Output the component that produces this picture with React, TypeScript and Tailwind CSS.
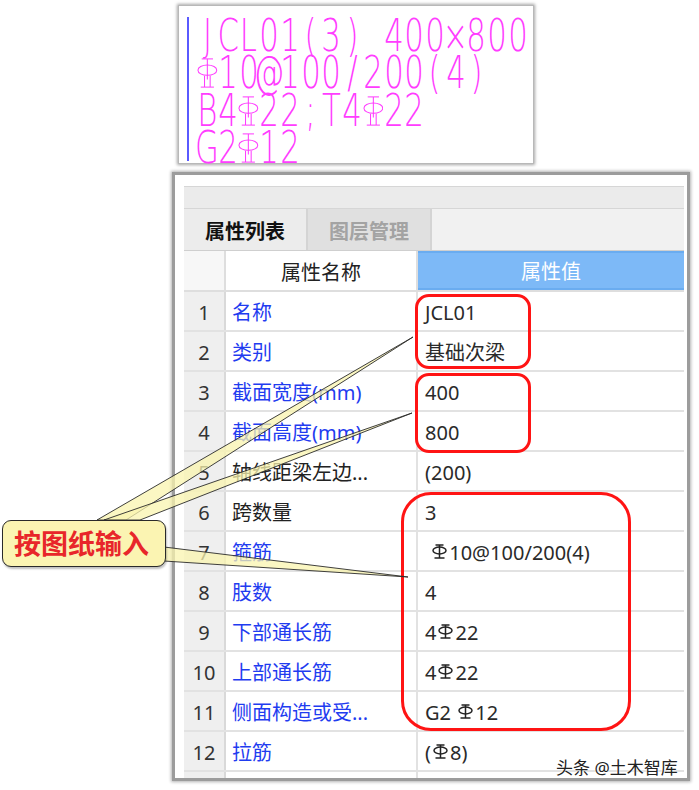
import React from "react";

const CJK = "font-['Noto_Sans','Noto_Sans_CJK_SC',sans-serif]";

type Row = { n: number; name: string; value: string; blue: boolean };

// "#" in a value stands for the grade-III rebar symbol
const ROWS: Row[] = [
  { n: 1, name: "名称", value: "JCL01", blue: true },
  { n: 2, name: "类别", value: "基础次梁", blue: true },
  { n: 3, name: "截面宽度(mm)", value: "400", blue: true },
  { n: 4, name: "截面高度(mm)", value: "800", blue: true },
  { n: 5, name: "轴线距梁左边...", value: "(200)", blue: false },
  { n: 6, name: "跨数量", value: "3", blue: false },
  { n: 7, name: "箍筋", value: " #10@100/200(4)", blue: true },
  { n: 8, name: "肢数", value: "4", blue: true },
  { n: 9, name: "下部通长筋", value: "4#22", blue: true },
  { n: 10, name: "上部通长筋", value: "4#22", blue: true },
  { n: 11, name: "侧面构造或受...", value: "G2 #12", blue: true },
  { n: 12, name: "拉筋", value: "(#8)", blue: true },
  { n: 13, name: "", value: "", blue: true },
];

const CAD_LINES = ["JCL01(3) 400×800", "#10@100/200(4)", "B4#22;T4#22", "G2#12"];

function RebarIcon({ className }: { className?: string }) {
  return (
    <svg viewBox="0 0 16 20" className={className} fill="none" stroke="currentColor" strokeWidth="1.5">
      <line x1="4" y1="3" x2="12" y2="3" />
      <line x1="8" y1="3" x2="8" y2="16" />
      <ellipse cx="8" cy="8.5" rx="6.5" ry="3.4" />
      <line x1="3" y1="16" x2="13" y2="16" />
    </svg>
  );
}

function CadRebar() {
  return (
    <svg viewBox="0 0 22 34" className="h-[34px] w-[22px]" fill="none" stroke="currentColor" strokeWidth="1.1">
      <line x1="5" y1="2" x2="17" y2="2" />
      <line x1="11" y1="2" x2="11" y2="24" />
      <ellipse cx="11" cy="14" rx="10" ry="5.5" />
      <line x1="8" y1="20" x2="8" y2="32" />
      <line x1="14" y1="20" x2="14" y2="32" />
      <line x1="4" y1="32" x2="18" y2="32" />
    </svg>
  );
}

function CadLine({ text }: { text: string }) {
  return (
    <div className="flex h-[37.5px] items-center">
      {text.split("").map((ch, i) => (
        <span key={i} className="inline-flex w-[20.7px] justify-center">
          {ch === "#" ? (
            <CadRebar />
          ) : (
            <span className="inline-block scale-x-[0.7] font-['DejaVu_Sans',sans-serif] text-[44px] font-extralight leading-none">
              {ch === " " ? "\u00a0" : ch}
            </span>
          )}
        </span>
      ))}
    </div>
  );
}

function Value({ text }: { text: string }) {
  return (
    <span className="flex items-center whitespace-pre">
      {text.split("").map((ch, i) =>
        ch === "#" ? (
          <RebarIcon key={i} className="mx-[1px] -mt-[3px] h-[20px] w-[17px] text-[#222]" />
        ) : (
          <span key={i}>{ch}</span>
        )
      )}
    </span>
  );
}

export default function App() {
  return (
    <div className={`relative h-[790px] w-[699px] overflow-hidden bg-white ${CJK}`}>
      {/* CAD annotation preview */}
      <div className="ml-[178px] mt-[5px] h-[159px] w-[356px] border border-[#b8b8b8] bg-white pl-[8px] pt-[11px] shadow-[0_0_3px_1px_rgba(0,0,0,0.35)]">
        <div className="flex h-[144px]">
          <div className="w-[2px] bg-[#5a5aff]" />
          <div className="pl-[8px] text-[#ff3dff]">
            {CAD_LINES.map((l) => (
              <CadLine key={l} text={l} />
            ))}
          </div>
        </div>
      </div>

      {/* property panel */}
      <div className="ml-[172px] mt-[8px] h-[609px] w-[518px] border-[3px] border-[#9c9c9c] bg-white pl-[9px] pr-[3px] pt-[11px] shadow-[0_0_3px_1px_rgba(0,0,0,0.3)]">
        <div className="h-full overflow-hidden">
          <div className="h-[23px] border-y border-[#d6d6d6] bg-[#ebebeb]" />
          <div className="flex h-[42px] border-b border-[#cfcfcf] bg-[#f1f1f1]">
            <div className="flex w-[124px] items-center justify-center border-r-2 border-[#d4d4d4] bg-[#ececec] pt-[5px] text-[20px] font-bold text-[#111]">
              属性列表
            </div>
            <div className="flex w-[124px] items-center justify-center border-r-2 border-[#d4d4d4] bg-[#e0e0e0] pt-[5px] text-[20px] font-bold text-[#a3a3a3]">
              图层管理
            </div>
            <div className="flex-1" />
          </div>
          <div className="flex h-[41px] border-b-2 border-[#dedede] text-[20px]">
            <div className="w-[42px] border-r-2 border-[#dedede] bg-[#f7f7f7]" />
            <div className="flex w-[192px] items-center justify-center border-r-2 border-[#dedede] pt-[5px] text-[#222]">
              属性名称
            </div>
            <div className="flex flex-1 items-center justify-center border-y-2 border-[#6aacf0] bg-[#7db9f7] pt-[3px] text-white">
              属性值
            </div>
          </div>
          {ROWS.map((r) => (
            <div key={r.n} className="flex h-[40px] border-b-2 border-[#e2e2e2] text-[20px]">
              <div className="flex w-[42px] items-center justify-center border-r-2 border-[#d9d9d9] bg-[#efefef] pt-[4px] text-[#333]">
                {r.n < 13 ? r.n : ""}
              </div>
              <div
                className={`flex w-[192px] items-center whitespace-nowrap border-r-2 border-[#e2e2e2] pl-[6px] pt-[4px] ${
                  r.blue ? "text-[#1f3cf0]" : "text-[#222]"
                }`}
              >
                {r.name}
              </div>
              <div className="flex flex-1 items-center pl-[7px] pt-[4px] text-[#2a2a2a]">
                <Value text={r.value} />
              </div>
            </div>
          ))}
        </div>
      </div>

      {/* red highlight outlines */}
      <div className="absolute left-[415px] top-[294px] h-[75px] w-[116px] rounded-[14px] border-[3px] border-[#ff1414]" />
      <div className="absolute left-[415px] top-[373px] h-[80px] w-[116px] rounded-[14px] border-[3px] border-[#ff1414]" />
      <div className="absolute left-[401px] top-[492px] h-[239px] w-[230px] rounded-[30px] border-[3px] border-[#ff1414]" />

      {/* callout pointers */}
      <svg className="pointer-events-none absolute left-0 top-0 h-[790px] w-[699px]" viewBox="0 0 699 790">
        <g fill="rgba(250,244,175,0.75)" stroke="#2a2a2a" strokeWidth="0.9" strokeLinejoin="round">
          <polygon points="97,520 126,520 413,337" />
          <polygon points="104,520 140,520 412,413" />
          <polygon points="164,547 164,561 408,577" />
        </g>
      </svg>

      <div className="absolute left-[2px] top-[520px] flex h-[47px] w-[164px] items-center rounded-[9px] border-[1.5px] border-[#2a2a2a] bg-[#fbf4b2] pl-[11px] pt-[2px] text-[27px] font-bold text-[#e8262a] shadow-[1px_2px_2px_rgba(0,0,0,0.25)]">
        按图纸输入
      </div>

      <div className="absolute left-[556px] top-[755px] text-[17px] text-[#222] [text-shadow:0_0_2px_#fff,0_0_2px_#fff]">
        头条 @土木智库
      </div>
    </div>
  );
}
